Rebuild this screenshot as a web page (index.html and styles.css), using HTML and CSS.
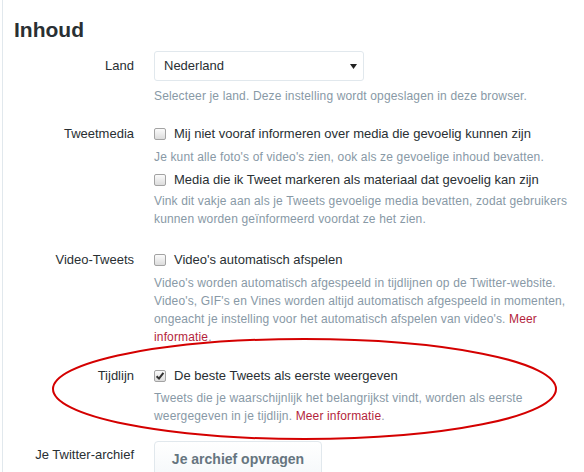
FILE: index.html
```html
<!DOCTYPE html>
<html>
<head>
<meta charset="utf-8">
<link rel="stylesheet" href="styles.css">
</head>
<body>
<div class="m-settings">
    <h2 class="title">Inhoud</h2>

    <div class="row">
        <div class="label label-select">Land</div>
        <div class="controls">
            <div class="select">
                <span>Nederland</span>
                <svg class="caret" width="7" height="5" viewBox="0 0 7 5"><polygon points="0,0 7,0 3.5,5" fill="#222"/></svg>
            </div>
            <p class="help help-first">Selecteer je land. Deze instelling wordt opgeslagen in deze browser.</p>
        </div>
    </div>

    <div class="row row-tweetmedia">
        <div class="label">Tweetmedia</div>
        <div class="controls">
            <div class="check"><span class="box"></span>Mij niet vooraf informeren over media die gevoelig kunnen zijn</div>
            <p class="help">Je kunt alle foto's of video's zien, ook als ze gevoelige inhoud bevatten.</p>
            <div class="check check-next"><span class="box"></span>Media die ik Tweet markeren als materiaal dat gevoelig kan zijn</div>
            <p class="help help-tight">Vink dit vakje aan als je Tweets gevoelige media bevatten, zodat gebruikers kunnen worden geïnformeerd voordat ze het zien.</p>
        </div>
    </div>

    <div class="row row-video">
        <div class="label">Video-Tweets</div>
        <div class="controls">
            <div class="check"><span class="box"></span>Video's automatisch afspelen</div>
            <p class="help">Video's worden automatisch afgespeeld in tijdlijnen op de Twitter-website. Video's, GIF's en Vines worden altijd automatisch afgespeeld in momenten, ongeacht je instelling voor het automatisch afspelen van video's. <a href="#">Meer informatie</a>.</p>
        </div>
    </div>

    <div class="row row-timeline">
        <div class="label">Tijdlijn</div>
        <div class="controls">
            <div class="check"><span class="box"><svg width="10" height="10" viewBox="0 0 10 10"><path d="M1.6 5.2 L4 7.6 L8.4 1.8" fill="none" stroke="#333" stroke-width="2"/></svg></span>De beste Tweets als eerste weergeven</div>
            <p class="help help-3">Tweets die je waarschijnlijk het belangrijkst vindt, worden als eerste weergegeven in je tijdlijn. <a href="#">Meer informatie</a>.</p>
        </div>
    </div>

    <div class="row row-archive">
        <div class="label label-archive">Je Twitter-archief</div>
        <div class="controls">
            <button class="btn">Je archief opvragen</button>
        </div>
    </div>
</div>

<!-- rode markering rond de tijdlijn-instelling -->
<svg class="mark" width="584" height="472" viewBox="0 0 584 472">
    <ellipse cx="304.5" cy="389" rx="251.5" ry="50" fill="none" stroke="#d40000" stroke-width="2"/>
</svg>
</body>
</html>
```

FILE: styles.css
```css
html, body {height: 100%; overflow: hidden;}
body {margin: 0; background: #fff; color: #292f33; font: 13px/20px "Liberation Sans", Arial, sans-serif;}
.m-settings {margin-left: 2px; border-left: 1px solid #e1e8ed; padding: 19px 0 0 11px; height: 100%; box-sizing: border-box;}
.title {margin: 0; font-size: 21px; line-height: 21px; font-weight: bold; color: #292f33;}

.row {display: grid; grid-template-columns: 120px 1fr; column-gap: 20px; margin-top: 11px; padding-right: 12px;}
.row-tweetmedia {margin-top: 19px;}
.row-video {margin-top: 22px;}
.row-timeline {margin-top: 20px;}
.row-archive {margin-top: 16px;}

.label {text-align: right; color: #292f33;}
.label-select {line-height: 30px;}
.label-archive {padding-top: 4px;}

.select {display: flex; align-items: center; justify-content: space-between; box-sizing: border-box; width: 210px; height: 30px; padding: 0 6px 0 9px; border: 1px solid #e1e8ed; border-radius: 3px; background: #fff;}
.caret {display: block;}

.check {display: flex; align-items: center;}
.check-next {margin-top: 4px;}
.box {display: flex; align-items: center; justify-content: center; box-sizing: border-box; width: 12px; height: 12px; margin-right: 8px; border: 1px solid #a3a3a3; border-radius: 2px; background: linear-gradient(#fbfbfb, #dcdcdc);}

.help {margin: 4px 0 0; color: #8899a6; font-size: 12px; line-height: 18px; letter-spacing: .15px;}
.help-first {margin-top: 6px;}
.help-tight {margin-top: 2px;}
.help-3 {margin-top: 3px;}
.help a {color: #b41f3c; text-decoration: none;}

.btn {box-sizing: border-box; width: 168px; height: 36px; padding: 0; border: 1px solid #e1e8ed; border-radius: 4px; background: linear-gradient(#fff, #f5f8fa); color: #66757f; font: bold 14px/20px "Liberation Sans", Arial, sans-serif;}

.mark {position: absolute; left: 0; top: 0; pointer-events: none;}
```
